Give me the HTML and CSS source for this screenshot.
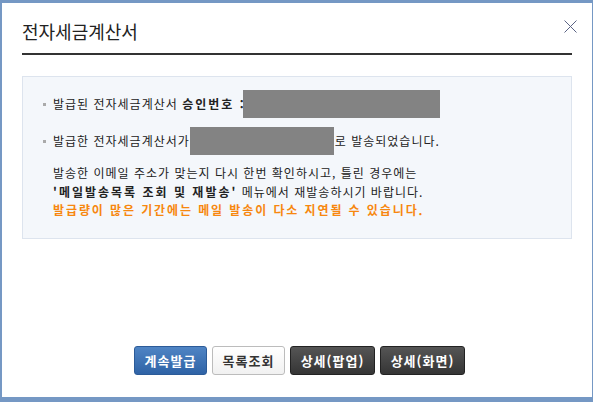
FILE: index.html
```html
<!DOCTYPE html>
<html lang="ko">
<head>
  <meta charset="UTF-8">
  <title>전자세금계산서</title>
  <link rel="stylesheet" href="styles.css">
</head>
<body>
  <div class="dialog">
    <div class="dialog-head">
      <h1>전자세금계산서</h1>
      <a class="close-btn" href="#" title="닫기">
        <svg width="13" height="13" viewBox="0 0 13 13">
          <path d="M0.5 0.5 L12.5 12.5 M12.5 0.5 L0.5 12.5" stroke="#5a6384" stroke-width="1" fill="none"/>
        </svg>
      </a>
    </div>

    <div class="info-box">
      <ul class="info-list">
        <li>발급된 전자세금계산서 <b>승인번호 :</b><span class="masked mask-no"></span></li>
        <li>발급한 전자세금계산서가<span class="masked mask-mail"></span>로 발송되었습니다.</li>
      </ul>
      <p class="info-text">
        발송한 이메일 주소가 맞는지 다시 한번 확인하시고, 틀린 경우에는<br>
        <b>'메일발송목록 조회 및 재발송'</b> 메뉴에서 재발송하시기 바랍니다.<br>
        <b class="warn">발급량이 많은 기간에는 메일 발송이 다소 지연될 수 있습니다.</b>
      </p>
    </div>

    <div class="btn-row">
      <button type="button" class="btn btn-blue">계속발급</button>
      <button type="button" class="btn btn-white">목록조회</button>
      <button type="button" class="btn btn-dark">상세(팝업)</button>
      <button type="button" class="btn btn-dark">상세(화면)</button>
    </div>
  </div>
</body>
</html>
```

FILE: styles.css
```css
* { margin: 0; padding: 0; box-sizing: border-box; }
html, body { width: 100%; height: 100%; }
body {
  background: #7598c4;
  padding: 3px 1px 5px 2px;
  font-family: "Noto Sans CJK KR", "Noto Sans", sans-serif;
  font-size: 12px;
  letter-spacing: 1px;
  color: #222;
}
b { letter-spacing: 2px; }
.dialog {
  position: relative;
  height: 100%;
  background: #fff;
  padding: 0 20px;
  display: flex;
  flex-direction: column;
}
.dialog-head {
  padding: 16px 0 10px;
  border-bottom: 2px solid #333;
}
.dialog-head h1 {
  font-size: 18px;
  font-weight: normal;
  line-height: 24px;
  letter-spacing: 0;
  color: #222;
}
.close-btn {
  position: absolute;
  top: 17px;
  right: 15px;
  display: block;
  width: 13px;
  height: 13px;
}
.close-btn svg { display: block; }
.info-box {
  margin-top: 21px;
  background: #f4f7fb;
  border: 1px solid #dde4ee;
  padding: 13px 0 18px 20px;
}
.info-list { list-style: none; }
.info-list li {
  height: 28px;
  line-height: 28px;
  white-space: nowrap;
}
.info-list li + li { margin-top: 9px; }
.info-list li::before {
  content: "";
  display: inline-block;
  vertical-align: middle;
  width: 3px;
  height: 3px;
  background: #aaa;
  margin: -2px 7px 0 0;
}
.masked {
  display: inline-block;
  vertical-align: top;
  height: 28px;
  background: #838383;
}
.mask-no { width: 197px; margin-left: -3px; }
.mask-mail { width: 144px; margin-right: 1px; }
.info-text {
  margin: 9px 0 0 10px;
  line-height: 18.5px;
}
.warn { color: #f7870f; letter-spacing: 1.9px; }
.btn-row {
  margin-top: auto;
  padding: 0 0 22px 5px;
  display: flex;
  justify-content: center;
  gap: 5px;
}
.btn {
  width: 73px;
  height: 29px;
  font-family: inherit;
  font-size: 13px;
  font-weight: bold;
  letter-spacing: 1px;
  border-radius: 3px;
  cursor: pointer;
}
.btn-blue {
  background: linear-gradient(#4f84c4, #2f63a6);
  border: 1px solid #2c5b98;
  color: #fff;
}
.btn-white {
  background: linear-gradient(#fff, #f1f1f1);
  border: 1px solid #bcbcbc;
  color: #333;
}
.btn-dark {
  width: 85px;
  background: linear-gradient(#555, #353535);
  border: 1px solid #222;
  color: #fff;
}
```
